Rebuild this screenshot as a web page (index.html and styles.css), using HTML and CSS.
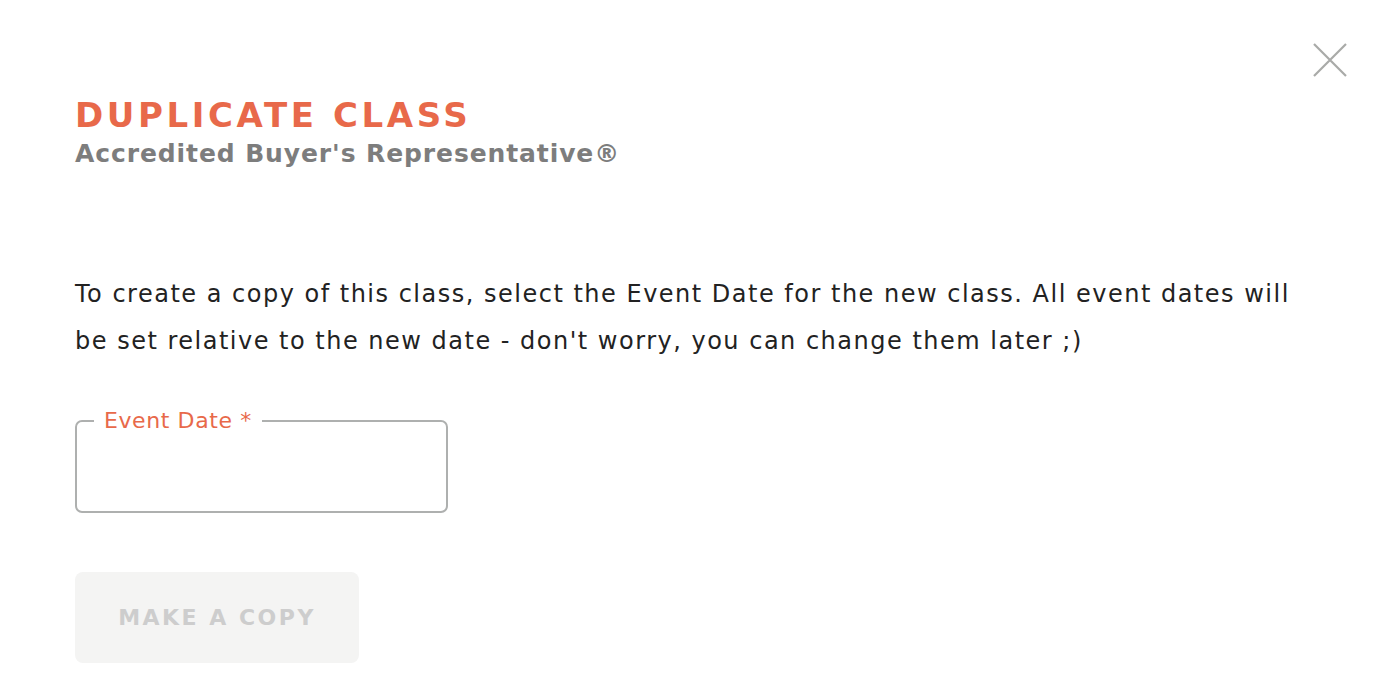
FILE: index.html
```html
<!DOCTYPE html>
<html lang="en">
<head>
<meta charset="utf-8">
<title>Duplicate Class</title>
<link rel="stylesheet" href="styles.css">
</head>
<body>
<div class="modal">
  <button class="close" aria-label="Close">
    <svg width="36" height="36" viewBox="0 0 36 36"><path d="M2 2 L34 34 M34 2 L2 34" stroke="#a9aaa8" stroke-width="2.2" fill="none"/></svg>
  </button>
  <header class="head">
    <h1 class="title">DUPLICATE CLASS</h1>
    <h2 class="subtitle">Accredited Buyer's Representative®</h2>
  </header>
  <p class="desc">To create a copy of this class, select the Event Date for the new class. All event dates will be set relative to the new date - don't worry, you can change them later ;)</p>
  <fieldset class="field">
    <legend class="label">Event Date *</legend>
    <input class="input" type="text" aria-label="Event Date">
  </fieldset>
  <button class="copy" disabled>MAKE A COPY</button>
</div>
</body>
</html>
```

FILE: styles.css
```css
html, body {
  margin: 0;
  padding: 0;
  background: #ffffff;
}
body {
  font-family: "DejaVu Sans", "Open Sans", sans-serif;
  color: #222222;
}
.modal {
  position: relative;
  width: 1386px;
  height: 692px;
  box-sizing: border-box;
  padding: 94px 75px 0 75px;
  display: flex;
  flex-direction: column;
  align-items: flex-start;
}
.close {
  position: absolute;
  top: 42px;
  right: 38px;
  width: 36px;
  height: 36px;
  padding: 0;
  border: 0;
  background: none;
}
.close svg { display: block; }
.head { margin: 0; }
.title {
  margin: 0;
  font-size: 34px;
  line-height: 42px;
  font-weight: 700;
  letter-spacing: 3.6px;
  color: #e8694a;
}
.subtitle {
  margin: 0;
  font-size: 25px;
  line-height: 36px;
  font-weight: 700;
  letter-spacing: 0.9px;
  color: #7d7d7d;
}
.desc {
  margin: 99px 0 0 0;
  width: 1240px;
  font-size: 24px;
  line-height: 47px;
  letter-spacing: 1.5px;
  color: #222222;
}
.field {
  margin: 44px 0 0 0;
  width: 373px;
  height: 104px;
  box-sizing: border-box;
  border: 2px solid #aeb0af;
  border-radius: 7px;
  padding: 0 0 0 17px;
  min-width: 0;
}
.label {
  padding: 0 10px;
  font-size: 22px;
  line-height: 24px;
  letter-spacing: 0.6px;
  color: #e8694a;
}
.input {
  border: 0;
  outline: none;
  background: transparent;
  width: 100%;
}
.copy {
  margin-top: 59px;
  width: 284px;
  height: 91px;
  border: 0;
  border-radius: 8px;
  background: #f4f4f3;
  color: #cdcdcd;
  font-family: "DejaVu Sans", "Open Sans", sans-serif;
  font-size: 22px;
  font-weight: 700;
  letter-spacing: 2.5px;
  padding: 0;
}
```
